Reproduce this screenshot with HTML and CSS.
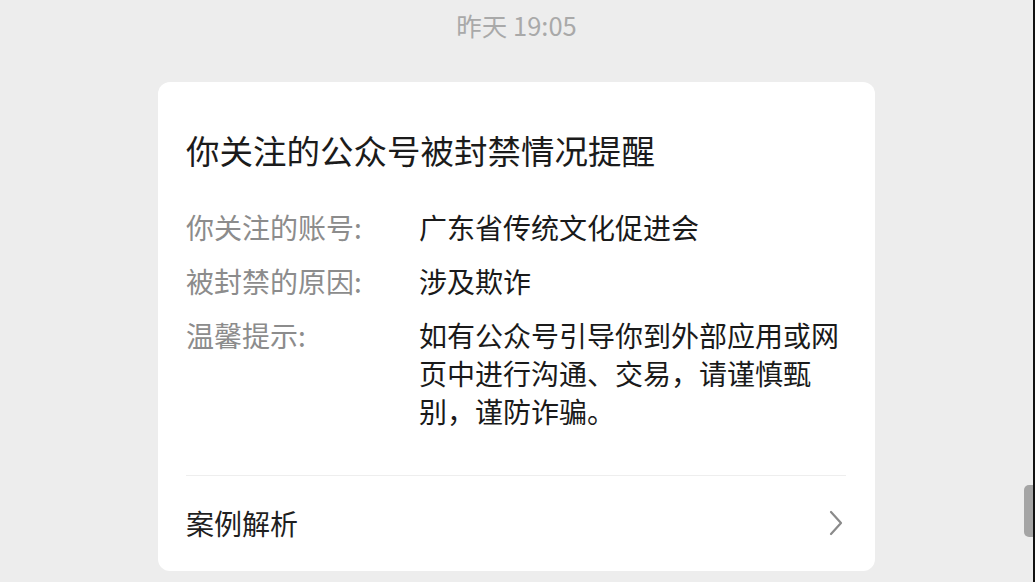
FILE: index.html
```html
<!DOCTYPE html>
<html lang="zh-CN">
<head>
<meta charset="utf-8">
<title>公众号封禁提醒</title>
<link rel="stylesheet" href="styles.css">
</head>
<body>
<div class="page">
  <div class="time">昨天 19:05</div>
  <div class="card">
    <div class="title">你关注的公众号被封禁情况提醒</div>
    <div class="rows">
      <div class="row">
        <div class="label">你关注的账号:</div>
        <div class="value">广东省传统文化促进会</div>
      </div>
      <div class="row">
        <div class="label">被封禁的原因:</div>
        <div class="value">涉及欺诈</div>
      </div>
      <div class="row">
        <div class="label">温馨提示:</div>
        <div class="value">如有公众号引导你到外部应用或网页中进行沟通、交易，请谨慎甄别，谨防诈骗。</div>
      </div>
    </div>
    <div class="divider"></div>
    <div class="footer">
      <span class="footer-text">案例解析</span>
      <svg class="chev" width="16" height="26" viewBox="0 0 16 26"><path d="M3 2 L13 13 L3 24" fill="none" stroke="#8a8a8a" stroke-width="2.2" stroke-linecap="round" stroke-linejoin="round"/></svg>
    </div>
  </div>
  <div class="scroll-thumb"></div>
  <div class="edge"></div>
</div>
</body>
</html>
```
FILE: styles.css
```css
html, body {
  margin: 0;
  padding: 0;
}
body {
  background: #ededed;
  font-family: "Noto Sans CJK SC", "Noto Sans", sans-serif;
  overflow: hidden;
}
.page {
  position: relative;
  width: 1035px;
  height: 582px;
  overflow: hidden;
}
.time {
  height: 50px;
  line-height: 50px;
  text-align: center;
  font-size: 25.5px;
  color: #a9a9a9;
  width: 1033px;
}
.card {
  margin: 32px 0 0 158px;
  width: 717px;
  box-sizing: border-box;
  background: #ffffff;
  border-radius: 12px;
  padding: 45px 29px 0 28px;
  height: 489px;
}
.title {
  font-size: 33.5px;
  line-height: 46px;
  color: #1b1b1b;
  white-space: nowrap;
}
.rows {
  margin-top: 35px;
  display: flex;
  flex-direction: column;
  gap: 16px;
}
.row {
  display: flex;
  font-size: 28px;
  line-height: 38px;
}
.label {
  width: 233px;
  flex: none;
  color: #8c8c8c;
}
.value {
  width: 426px;
  color: #1a1a1a;
}
.divider {
  margin-top: 45px;
  height: 1px;
  background: #eeeeee;
}
.footer {
  height: 94px;
  display: flex;
  align-items: center;
  justify-content: space-between;
}
.footer-text {
  font-size: 28px;
  color: #1f1f1f;
}
.chev {
  margin-right: 2px;
}
.scroll-thumb {
  position: absolute;
  left: 1024px;
  top: 485px;
  width: 9px;
  height: 52px;
  background: #a5a5a5;
  border-radius: 5px 0 0 5px;
}
.edge {
  position: absolute;
  left: 1033px;
  top: 0;
  width: 2px;
  height: 582px;
  background: #111111;
}
```
